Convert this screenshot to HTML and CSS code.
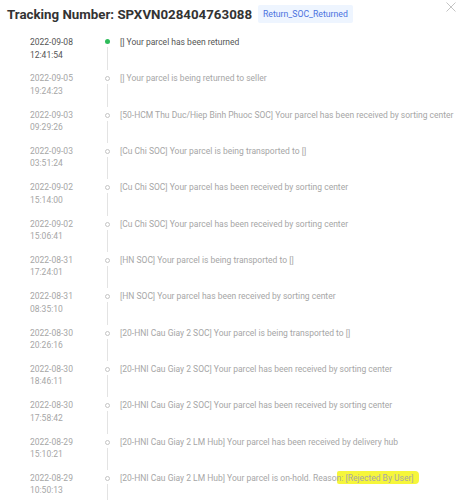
FILE: index.html
```html
<!DOCTYPE html>
<html lang="en">
<head>
  <meta charset="UTF-8">
  <meta name="viewport" content="width=device-width, initial-scale=1.0">
  <title>Tracking</title>
  <link rel="stylesheet" href="styles.css">
</head>
<body>

  <div class="modal">
    <div class="header">
      <h1>Tracking Number: SPXVN028404763088</h1>
      <span class="tag">Return_SOC_Returned</span>
      <svg class="close" width="10" height="10" viewBox="0 0 10 10">
        <path d="M0.5 0.5 L9.5 9.5 M9.5 0.5 L0.5 9.5" stroke="#c4c4c4" stroke-width="1" fill="none"/>
      </svg>
    </div>

    <ul class="timeline">
      <li class="item current">
        <div class="date">2022-09-08<br>12:41:54</div>
        <div class="axis"><span class="dot"></span><span class="line"></span></div>
        <div class="desc">[] Your parcel has been returned</div>
      </li>
      <li class="item">
        <div class="date">2022-09-05<br>19:24:23</div>
        <div class="axis"><span class="dot"></span><span class="line"></span></div>
        <div class="desc">[] Your parcel is being returned to seller</div>
      </li>
      <li class="item">
        <div class="date">2022-09-03<br>09:29:26</div>
        <div class="axis"><span class="dot"></span><span class="line"></span></div>
        <div class="desc">[50-HCM Thu Duc/Hiep Binh Phuoc SOC] Your parcel has been received by sorting center</div>
      </li>
      <li class="item">
        <div class="date">2022-09-03<br>03:51:24</div>
        <div class="axis"><span class="dot"></span><span class="line"></span></div>
        <div class="desc">[Cu Chi SOC] Your parcel is being transported to []</div>
      </li>
      <li class="item">
        <div class="date">2022-09-02<br>15:14:00</div>
        <div class="axis"><span class="dot"></span><span class="line"></span></div>
        <div class="desc">[Cu Chi SOC] Your parcel has been received by sorting center</div>
      </li>
      <li class="item">
        <div class="date">2022-09-02<br>15:06:41</div>
        <div class="axis"><span class="dot"></span><span class="line"></span></div>
        <div class="desc">[Cu Chi SOC] Your parcel has been received by sorting center</div>
      </li>
      <li class="item">
        <div class="date">2022-08-31<br>17:24:01</div>
        <div class="axis"><span class="dot"></span><span class="line"></span></div>
        <div class="desc">[HN SOC] Your parcel is being transported to []</div>
      </li>
      <li class="item">
        <div class="date">2022-08-31<br>08:35:10</div>
        <div class="axis"><span class="dot"></span><span class="line"></span></div>
        <div class="desc">[HN SOC] Your parcel has been received by sorting center</div>
      </li>
      <li class="item">
        <div class="date">2022-08-30<br>20:26:16</div>
        <div class="axis"><span class="dot"></span><span class="line"></span></div>
        <div class="desc">[20-HNI Cau Giay 2 SOC] Your parcel is being transported to []</div>
      </li>
      <li class="item">
        <div class="date">2022-08-30<br>18:46:11</div>
        <div class="axis"><span class="dot"></span><span class="line"></span></div>
        <div class="desc">[20-HNI Cau Giay 2 SOC] Your parcel has been received by sorting center</div>
      </li>
      <li class="item">
        <div class="date">2022-08-30<br>17:58:42</div>
        <div class="axis"><span class="dot"></span><span class="line"></span></div>
        <div class="desc">[20-HNI Cau Giay 2 SOC] Your parcel has been received by sorting center</div>
      </li>
      <li class="item">
        <div class="date">2022-08-29<br>15:10:21</div>
        <div class="axis"><span class="dot"></span><span class="line"></span></div>
        <div class="desc">[20-HNI Cau Giay 2 LM Hub] Your parcel has been received by delivery hub</div>
      </li>
      <li class="item">
        <div class="date">2022-08-29<br>10:50:13</div>
        <div class="axis"><span class="dot"></span><span class="line"></span></div>
        <div class="desc">[20-HNI Cau Giay 2 LM Hub] Your parcel is on-hold. Reaso<span class="mark">n: [Rejected By User]</span></div>
      </li>
    </ul>
  </div>

</body>
</html>
```

FILE: styles.css
```css
body {
  font-family: 'Roboto', 'Liberation Sans', sans-serif;
  background-color: #fff;
  margin: 0;
  padding: 0;
}
.modal {
  width: 460px;
}
.header {
  display: flex;
  align-items: center;
  height: 28px;
  padding-left: 7px;
  position: relative;
}
h1 {
  font-size: 13.3px;
  font-weight: bold;
  color: #333;
  margin: 0;
}
.tag {
  margin-left: 6px;
  background: #eef5ff;
  color: #4b72e0;
  font-size: 8.7px;
  padding: 4px 5px;
  border-radius: 2px;
}
.close {
  position: absolute;
  right: 4px;
  top: 2px;
}
.timeline {
  list-style: none;
  margin: 8px 0 0;
  padding: 0;
}
.item {
  display: flex;
  height: 36.33px;
  font-size: 8.5px;
  line-height: 12.5px;
  color: #a6a6a6;
}
.date {
  width: 70px;
  padding-left: 30px;
}
.axis {
  width: 14px;
  display: flex;
  flex-direction: column;
  align-items: center;
}
.dot {
  width: 3px;
  height: 3px;
  margin-top: 4px;
  border: 1px solid #c4c4c4;
  border-radius: 50%;
}
.line {
  flex: 1;
  width: 1px;
  margin: 3px 0 2px;
  background: #e3e3e3;
}
.desc {
  margin-left: 6px;
  white-space: nowrap;
}
.current {
  color: #555;
}
.current .dot {
  width: 5px;
  height: 5px;
  margin-top: 3px;
  border: none;
  background: #2ebc5a;
}
.mark {
  background: #f6f63a;
  padding: 2px 5px 1px 0;
  border-radius: 2px 4px 4px 2px;
}
```
